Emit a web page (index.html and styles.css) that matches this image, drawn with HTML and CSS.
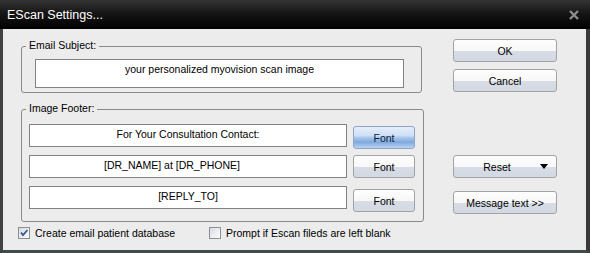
FILE: index.html
```html
<!DOCTYPE html>
<html lang="en">
<head>
  <meta charset="UTF-8">
  <title>EScan Settings</title>
  <link rel="stylesheet" href="styles.css">
</head>
<body>
  <div class="window">
    <div class="titlebar">
      <span class="title">EScan Settings...</span>
      <svg class="close" width="10" height="10" viewBox="0 0 10 10">
        <path d="M1 1 L9 9 M9 1 L1 9" stroke="#8d8d8d" stroke-width="2.4" fill="none"/>
      </svg>
    </div>

    <div class="content">
      <div class="left">
        <!-- Email subject group -->
        <div class="group email">
          <span class="group-title">Email Subject:</span>
          <div class="field subject">your personalized myovision scan image</div>
        </div>

        <!-- Image footer group -->
        <div class="group footer">
          <span class="group-title">Image Footer:</span>
          <div class="row">
            <div class="field line">For Your Consultation Contact:</div>
            <button class="btn font-btn hot first">Font</button>
          </div>
          <div class="row">
            <div class="field line shift">[DR_NAME] at [DR_PHONE]</div>
            <button class="btn font-btn">Font</button>
          </div>
          <div class="row">
            <div class="field line">[REPLY_TO]</div>
            <button class="btn font-btn third">Font</button>
          </div>
        </div>

        <div class="checks">
          <label class="check wide">
            <span class="box">
              <svg width="10" height="10" viewBox="0 0 10 10">
                <path d="M2 4.5 L4 7 L8.5 2" stroke="#3b5590" stroke-width="1.8" fill="none"/>
              </svg>
            </span>
            Create email patient database
          </label>
          <label class="check">
            <span class="box"></span>
            Prompt if Escan fileds are left blank
          </label>
        </div>
      </div>

      <div class="right">
        <button class="btn side">OK</button>
        <button class="btn side cancel">Cancel</button>
        <button class="btn side reset">
          <span class="reset-label">Reset</span>
          <span class="arrow"></span>
        </button>
        <button class="btn side message">Message text &gt;&gt;</button>
      </div>
    </div>
  </div>
</body>
</html>
```

FILE: styles.css
```css
/* Page */
body {
  margin: 0;
  background-color: #3a3a3a;
  font-family: "Liberation Sans", Arial, sans-serif;
}

/* Dialog window */
.window {
  width: 590px;
  height: 253px;
}

/* Title bar */
.titlebar {
  height: 29px;
  display: flex;
  align-items: center;
  justify-content: space-between;
  padding: 0 11px 0 7px;
  box-sizing: border-box;
  background: linear-gradient(#343434 0%, #161616 45%, #000 100%);
}

.title {
  color: #fff;
  font-size: 12.5px;
  line-height: 28px;
}

.close {
  display: block;
}

/* Body of the dialog */
.content {
  display: flex;
  gap: 29px;
  height: 224px;
  box-sizing: border-box;
  padding: 0 29px 0 15px;
  background-color: #ececec;
  border-left: 3px solid #424242;
  border-right: 4px solid #3a3a3a;
  border-bottom: 3px solid #3f4c4e;
  font-size: 10.5px;
  color: #000;
}

.left {
  width: 406px;
  padding-top: 17px;
}

.right {
  width: 104px;
  padding-top: 10px;
  display: flex;
  flex-direction: column;
}

/* Group boxes */
.group {
  position: relative;
  margin-left: 3px;
  border: 1px solid #8a8a8a;
  border-radius: 3px;
  box-sizing: border-box;
}

.group-title {
  position: absolute;
  top: -8px;
  left: 4px;
  padding: 0 3px;
  line-height: 13px;
  background-color: #ececec;
}

.email {
  width: 401px;
  padding: 12px 17px 4px 13px;
}

.footer {
  width: 403px;
  margin-top: 16px;
  padding: 14px 8px 12px 7px;
  display: flex;
  flex-direction: column;
  gap: 8px;
}

/* Text fields */
.field {
  background-color: #fff;
  border: 1px solid #828282;
  box-sizing: border-box;
  text-align: center;
  white-space: nowrap;
}

.subject {
  width: 369px;
  height: 29px;
  padding-top: 3px;
  line-height: 13px;
}

.row {
  display: flex;
  gap: 6px;
  height: 23px;
}

.line {
  width: 318px;
  height: 23px;
  line-height: 19px;
}

.shift {
  padding-right: 32px;
}

/* Buttons */
.btn {
  display: flex;
  align-items: center;
  justify-content: center;
  padding: 0;
  height: 23px;
  box-sizing: border-box;
  border: 1px solid #a3a3a3;
  border-radius: 3px;
  background: linear-gradient(#fefefe 0%, #f7f7f7 52%, #d7dce5 53%, #d3d9e3 100%);
  font-family: inherit;
  font-size: 10.5px;
  color: #000;
}

.font-btn {
  width: 62px;
}

.font-btn.first {
  margin: 2px 0 -2px;
}

.font-btn.third {
  margin: 3px 0 -3px;
}

/* Highlighted (hovered) font button */
.hot {
  border-color: #8ea5c4;
  color: #0c1a3a;
  background: linear-gradient(#e6eefa 0%, #cfe0f6 40%, #a7c5ec 52%, #7fa9de 72%, #b9d2f2 100%);
}

.side {
  width: 104px;
}

.cancel {
  margin-top: 7px;
}

.reset {
  margin-top: 63px;
}

.reset-label {
  flex: 1;
  text-align: center;
}

.arrow {
  width: 0;
  height: 0;
  margin-right: 8px;
  border-left: 4px solid transparent;
  border-right: 4px solid transparent;
  border-top: 5px solid #000;
}

.message {
  margin-top: 13px;
}

/* Checkboxes */
.checks {
  display: flex;
  margin-top: 4px;
  height: 14px;
}

.check {
  display: flex;
  align-items: center;
  gap: 5px;
  white-space: nowrap;
}

.check.wide {
  width: 191px;
}

.box {
  width: 12px;
  height: 12px;
  box-sizing: border-box;
  border: 1px solid #8d8f91;
  background: linear-gradient(135deg, #d6dbe3 0%, #eef0f3 60%, #fbfbfb 100%);
  display: flex;
  align-items: center;
  justify-content: center;
}

.box svg {
  display: block;
}
```
